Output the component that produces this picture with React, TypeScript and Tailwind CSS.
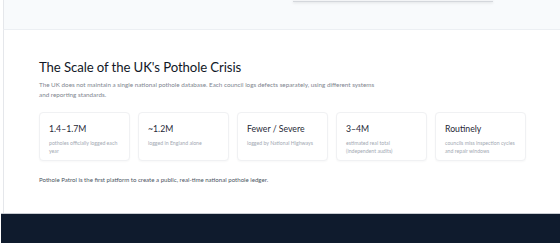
export default function App() {
  const cards = [
    { v: "1.4–1.7M", s: "potholes officially logged each year" },
    { v: "~1.2M", s: "logged in England alone" },
    { v: "Fewer / Severe", s: "logged by National Highways" },
    { v: "3–4M", s: "estimated real total (independent audits)" },
    { v: "Routinely", s: "councils miss inspection cycles and repair windows" },
  ];
  return (
    <div
      className="w-[560px] h-[243px] overflow-hidden bg-white flex flex-col"
      style={{ fontFamily: 'Lato, "Open Sans", sans-serif' }}
    >
      <div className="ml-[3px] h-[30px] shrink-0 bg-[#f8fafc] border-b border-[#eceff3] border-l border-l-[#e5e7eb]">
        <div className="ml-[289px] w-[200px] h-[2px] border-b border-[#d4d7dc] bg-[#f3f4f6] shadow-sm" />
      </div>
      <div className="ml-[3px] flex-1 border-l border-[#e5e7eb] pl-[35px] pt-[27px]">
        <h2 className="text-[13.2px] leading-[20px] text-[#111827] font-normal tracking-[-0.1px]">
          The Scale of the UK's Pothole Crisis
        </h2>
        <p className="mt-[3px] w-[342px] text-[6.3px] leading-[10px] text-[#80868f]">
          The UK does not maintain a single national pothole database. Each council logs defects separately, using different systems and reporting standards.
        </p>
        <div className="mt-[12px] flex gap-[8px]">
          {cards.map((c) => (
            <div
              key={c.v}
              className="w-[91px] h-[49px] rounded-[4px] border border-[#f0f1f3] bg-white shadow-[0_1px_2px_rgba(0,0,0,0.03)] px-[9px] pt-[10px]"
            >
              <div className="text-[8.7px] leading-[12px] text-[#1f2937]">{c.v}</div>
              <div className="mt-[4px] text-[5.2px] leading-[8px] text-[#a3a9b3]">{c.s}</div>
            </div>
          ))}
        </div>
        <p className="mt-[14px] text-[6.1px] leading-[10px] text-[#4b5563]">
          Pothole Patrol is the first platform to create a public, real-time national pothole ledger.
        </p>
      </div>
      <div className="h-[30px] shrink-0 ml-[1px] bg-[#0f1b2d] border-t border-[#c8ccd2]" />
    </div>
  );
}
